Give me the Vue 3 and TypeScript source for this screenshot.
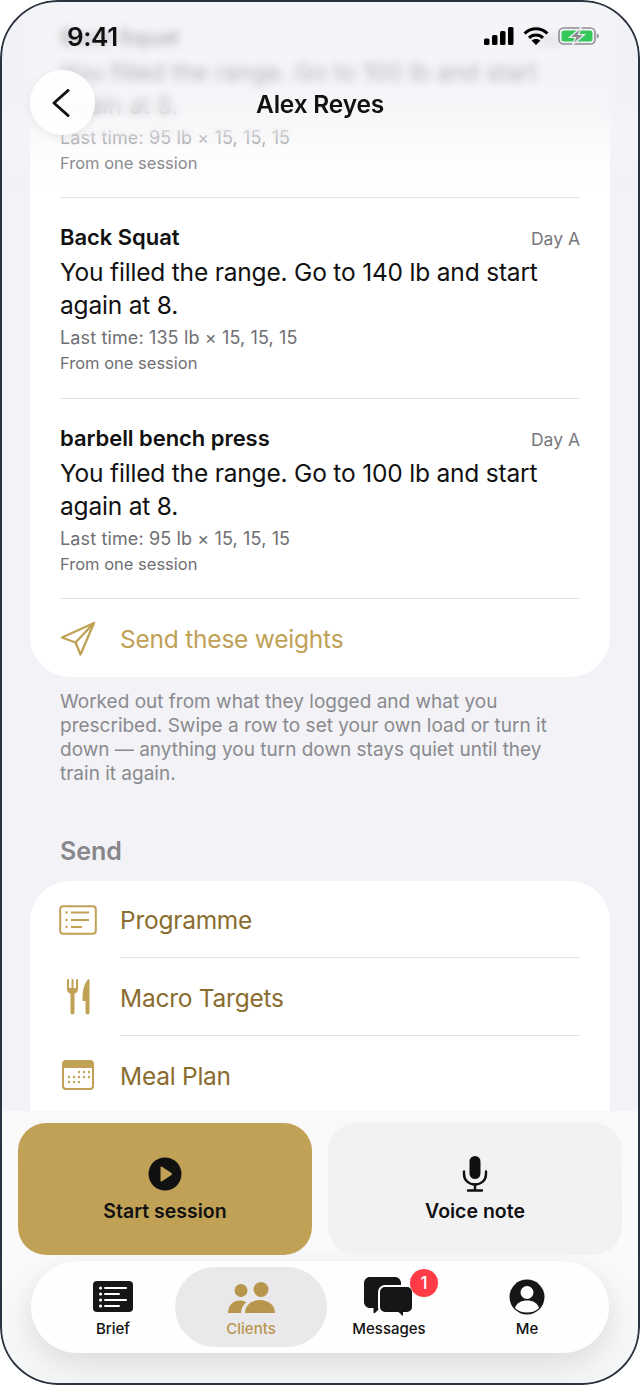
<script setup lang="ts">
const lifts = [
  { name: 'Back Squat', weight: 100, last: 95 },
  { name: 'Back Squat', weight: 140, last: 135 },
  { name: 'barbell bench press', weight: 100, last: 95 },
]
const sendItems = ['Programme', 'Macro Targets', 'Meal Plan']
const tabs = ['Brief', 'Clients', 'Messages', 'Me']

// calendar dots: x positions per row
const dots: number[][] = []
const rows: [number, number[]][] = [
  [12, [17, 22, 27]],
  [17, [7, 12, 17, 22, 27]],
  [22, [7, 12, 17]],
]
for (const [y, xs] of rows) {
  for (const x of xs) dots.push([x, y])
}
</script>

<template>
  <div class="phone">
    <main class="scroll">
      <section class="card weights">
        <div v-for="(lift, i) in lifts" :key="i" class="lift">
          <div class="lift-head">
            <strong>{{ lift.name }}</strong>
            <span>Day A</span>
          </div>
          <p class="advice">You filled the range. Go to {{ lift.weight }} lb and start again at 8.</p>
          <p class="meta">Last time: {{ lift.last }} lb × 15, 15, 15</p>
          <p class="meta from">From one session</p>
        </div>
        <div class="send-weights">
          <svg width="36" height="36" viewBox="0 0 36 36" fill="none" stroke="#c0a156" stroke-width="2.3" stroke-linejoin="round" stroke-linecap="round">
            <path d="M34 2 2 16.500l13.500 5L20.500 33.500Z" />
            <path d="M34 2 15.500 21.500" />
          </svg>
          <span>Send these weights</span>
        </div>
      </section>

      <p class="note">Worked out from what they logged and what you prescribed. Swipe a row to set your own load or turn it down — anything you turn down stays quiet until they train it again.</p>

      <h2 class="section-title">Send</h2>

      <section class="card send-list">
        <div v-for="item in sendItems" :key="item" class="send-row">
          <span class="send-icon">
            <svg v-if="item === 'Programme'" width="38" height="30" viewBox="0 0 38 30" fill="none" stroke="#c0a156">
              <rect x="1.200" y="1.200" width="35.600" height="27.600" rx="3" stroke-width="2" />
              <path d="M12 7.500h18M12 15h18M12 22h11" stroke-width="1.800" />
              <path d="M6.500 7.500h2M6.500 15h2M6.500 22h2" stroke-width="2.400" />
            </svg>
            <svg v-else-if="item === 'Macro Targets'" width="24" height="38" viewBox="0 0 24 38" fill="#c0a156">
              <path d="M1 2a1 1 0 0 1 2 0V10h2.500V2a1 1 0 0 1 2 0V10H10V2a1 1 0 0 1 2 0V11c0 2.500-1.200 4-3.500 4.800V34.500a2 2 0 0 1-4 0V15.800C2.200 15 1 13.500 1 11Z" />
              <path d="M22 1.500c.8-.4 1.500 0 1.500 1V34.500a2 2 0 0 1-4 0V23H17.500c-.7 0-1-.4-1-1 0-9 1.500-16.500 5.500-20.500Z" />
            </svg>
            <svg v-else width="32" height="30" viewBox="0 0 32 30">
              <rect x="1" y="1" width="30" height="28" rx="3" fill="#fff" stroke="#c0a156" stroke-width="2" />
              <path d="M1 8V4a3 3 0 0 1 3-3h24a3 3 0 0 1 3 3v4Z" fill="#c0a156" />
              <circle v-for="d in dots" :key="d[0] + '-' + d[1]" :cx="d[0]" :cy="d[1]" r="1.200" fill="#c0a156" />
            </svg>
          </span>
          <span class="send-label">{{ item }}</span>
        </div>
      </section>
    </main>

    <div class="top-blur"></div>
    <div class="top-tint"></div>
    <header class="topbar">
      <div class="status">
        <span class="clock">9:41</span>
        <span class="status-icons">
          <svg width="30" height="18" viewBox="0 0 30 18" fill="#000">
            <rect x="0" y="11.500" width="5.500" height="6.500" rx="1.500" />
            <rect x="8" y="8" width="5.500" height="10" rx="1.500" />
            <rect x="16" y="4" width="5.500" height="14" rx="1.500" />
            <rect x="24" y="0" width="5.500" height="18" rx="1.500" />
          </svg>
          <svg width="26" height="18" viewBox="0 0 26 18" fill="none" stroke="#000" stroke-width="3">
            <path d="M1.500 6.500C8.500 .200 17.500 .200 24.500 6.500" />
            <path d="M6 10.800c4-3.700 10-3.700 14 0" />
            <path d="M13 18 8.600 13.600c2.500-2 6.300-2 8.800 0Z" fill="#000" stroke="none" />
          </svg>
          <svg width="41" height="18" viewBox="0 0 41 18">
            <rect x="1" y="1" width="36" height="16" rx="4.500" fill="none" stroke="#8e8e93" stroke-width="1.600" />
            <rect x="3.500" y="3.500" width="31" height="11" rx="2.500" fill="#34c759" />
            <path d="M38.800 6.500c1.500.4 2 1.400 2 2.500s-.5 2.100-2 2.500Z" fill="#8e8e93" />
            <path d="M23.500 0 11.500 10.500h6L14.500 18l12-10.500h-6Z" fill="#8e8e93" stroke="#f0f0f5" stroke-width="1.200" />
          </svg>
        </span>
      </div>
      <div class="navbar">
        <button class="back" aria-label="Back">
          <svg width="18" height="28" viewBox="0 0 18 28" fill="none" stroke="#111" stroke-width="3" stroke-linecap="round" stroke-linejoin="round">
            <path d="M16 1.500 2 14l14 12.500" />
          </svg>
        </button>
        <h1>Alex Reyes</h1>
      </div>
    </header>

    <footer class="dock">
      <div class="actions">
        <button class="action start">
          <span class="action-icon">
            <svg width="34" height="34" viewBox="0 0 34 34">
              <circle cx="17" cy="17" r="16.500" fill="#111" />
              <path d="M12.500 10.500c0-.8.800-1.200 1.500-.8l9.500 6.300c.6.400.6 1.500 0 1.900L14 24.300c-.7.500-1.500 0-1.500-.8Z" fill="#c0a156" />
            </svg>
          </span>
          <span>Start session</span>
        </button>
        <button class="action voice">
          <span class="action-icon">
            <svg width="26" height="36" viewBox="0 0 26 36" fill="none" stroke="#111" stroke-width="2.400" stroke-linecap="round">
              <rect x="7.500" y="0" width="11" height="23" rx="5.500" fill="#111" stroke="none" />
              <path d="M2 15.500v2.500c0 6.500 5 10.500 11 10.500s11-4 11-10.500v-2.500" />
              <path d="M13 28.500v5.500M6 34.500h14" />
            </svg>
          </span>
          <span>Voice note</span>
        </button>
      </div>
      <nav class="tabbar">
        <div v-for="tab in tabs" :key="tab" class="tab" :class="{ active: tab === 'Clients' }">
          <span class="tab-icon">
            <svg v-if="tab === 'Brief'" width="40" height="32" viewBox="0 0 40 32">
              <rect width="40" height="31" rx="4" fill="#161616" />
              <g stroke="#fff" stroke-width="2" stroke-linecap="round">
                <path d="M12 7h21M12 13h14M12 19h21M12 25h14" />
                <path d="M7.500 7h.1M7.500 13h.1M7.500 19h.1M7.500 25h.1" stroke-width="3" />
              </g>
            </svg>
            <svg v-else-if="tab === 'Clients'" width="47" height="31" viewBox="0 0 47 31" fill="#b8964e">
              <circle cx="13" cy="8.500" r="6.500" />
              <circle cx="33" cy="7.500" r="7.500" />
              <path d="M0 31c0-8 5.500-12.500 12-12.500 2.500 0 4.500.6 6.300 1.700C15 23 13.200 26.500 13 31Z" />
              <path d="M17 31c0-8 7-13 15-13s15 5 15 13Z" />
            </svg>
            <svg v-else-if="tab === 'Messages'" width="50" height="40" viewBox="0 0 50 40">
              <path d="M6 0h25c3.300 0 6 2.700 6 6v19c0 3.300-2.700 6-6 6H16l-5 5c-.8.600-1.500.2-1.500-.7V31H6c-3.300 0-6-2.700-6-6V6c0-3.300 2.700-6 6-6Z" fill="#161616" />
              <path d="M21 9h22c3.300 0 6 2.700 6 6v15c0 3.300-2.700 6-6 6h-3v3.300c0 .9-.8 1.300-1.500.7l-4.500-4H21c-3.300 0-6-2.700-6-6V15c0-3.300 2.700-6 6-6Z" fill="#161616" stroke="#fff" stroke-width="2" />
            </svg>
            <svg v-else width="36" height="36" viewBox="0 0 36 36">
              <circle cx="18" cy="18" r="17.500" fill="#161616" />
              <circle cx="18" cy="13.500" r="6.500" fill="#fff" />
              <path d="M6 29c1.500-5 6-7.500 12-7.500S28.500 24 30 29c-3 3-7 4.500-12 4.500S9 32 6 29Z" fill="#fff" />
            </svg>
            <span v-if="tab === 'Messages'" class="badge">1</span>
          </span>
          <span class="tab-label">{{ tab }}</span>
        </div>
      </nav>
    </footer>

    <div class="frame"></div>
  </div>
</template>

<style>
html,
body {
  margin: 0;
  background: #fff;
}
</style>

<style scoped>
.phone {
  position: relative;
  width: 640px;
  height: 1385px;
  overflow: hidden;
  border-radius: 58px;
  background: #f2f2f7;
  font-family: Inter, 'Liberation Sans', sans-serif;
  color: #111;
}

.frame {
  position: absolute;
  inset: 0;
  border: 2px solid #2b3340;
  border-radius: 58px;
  pointer-events: none;
}

.scroll {
  height: 100%;
  overflow: hidden;
  padding: 0 30px;
  box-sizing: border-box;
}

.card {
  background: #fff;
  border-radius: 40px;
  padding: 0 30px;
}

.weights {
  margin-top: -2.500px;
  border-top-left-radius: 0;
  border-top-right-radius: 0;
}

.lift {
  height: 200.500px;
  box-sizing: border-box;
  padding-top: 24px;
  border-bottom: 1px solid #e3e3e8;
}

.lift-head {
  display: flex;
  justify-content: space-between;
  align-items: center;
  height: 30px;
}

.lift-head strong {
  font-size: 22px;
  font-weight: 600;
  letter-spacing: -0.05px;
}

.lift-head span {
  font-size: 17.500px;
  color: #77777c;
  padding-top: 3px;
}

.advice {
  margin: 4px 0 0;
  font-size: 24.500px;
  line-height: 33px;
  letter-spacing: -0.19px;
}

.meta {
  margin: 3px 0 0;
  font-size: 18px;
  line-height: 26px;
  letter-spacing: 0.13px;
  color: #6f6f74;
}

.meta.from {
  margin: -1px 0 0;
  font-size: 16.500px;
  letter-spacing: 0;
}

.send-weights {
  display: flex;
  align-items: center;
  gap: 24px;
  height: 78px;
  padding-top: 1px;
  box-sizing: border-box;
  color: #c0a156;
  font-size: 24.500px;
  letter-spacing: -0.22px;
}

.note {
  margin: 12.500px 30px 0;
  font-size: 19px;
  line-height: 24px;
  color: #8a8a8e;
}

.section-title {
  margin: 49.500px 30px 0;
  font-size: 25px;
  line-height: 32px;
  font-weight: 600;
  color: #87878c;
}

.send-list {
  margin-top: 14px;
  padding-bottom: 60px;
  border-bottom-left-radius: 0;
  border-bottom-right-radius: 0;
}

.send-row {
  display: flex;
  align-items: center;
  height: 78px;
}

.send-row:first-child {
  height: 77px;
}

.send-icon {
  width: 38px;
  margin-left: -1px;
  margin-right: 23px;
  display: flex;
  justify-content: center;
}

.send-label {
  flex: 1;
  align-self: stretch;
  display: flex;
  align-items: center;
  padding-top: 2px;
  font-size: 24.500px;
  letter-spacing: -0.25px;
  color: #8a6c2f;
  border-bottom: 1px solid #e3e3e8;
}

.send-row:last-child .send-label {
  border-bottom: 0;
}

.top-blur {
  position: absolute;
  top: 0;
  left: 0;
  right: 0;
  height: 175px;
  backdrop-filter: blur(4px);
  mask-image: linear-gradient(#000 105px, transparent 150px);
}

.top-tint {
  position: absolute;
  top: 0;
  left: 0;
  right: 0;
  height: 190px;
  background: linear-gradient(rgba(241, 241, 246, 0.74) 0, rgba(241, 241, 246, 0.74) 80px, rgba(243, 243, 247, 0.78) 105px, rgba(245, 245, 248, 0.6) 130px, rgba(247, 247, 250, 0.28) 155px, rgba(247, 247, 250, 0) 190px);
}

.topbar {
  position: absolute;
  top: 0;
  left: 0;
  right: 0;
}

.status {
  display: flex;
  align-items: center;
  justify-content: space-between;
  height: 72px;
  padding: 0 41px 0 67px;
}

.clock {
  font-size: 26px;
  font-weight: 600;
  letter-spacing: -0.4px;
}

.status-icons {
  display: flex;
  align-items: center;
  gap: 9px;
}

.navbar {
  position: relative;
  display: flex;
  align-items: center;
  justify-content: center;
  height: 63px;
}

.navbar h1 {
  margin: 0;
  font-size: 24.500px;
  font-weight: 600;
  letter-spacing: -0.2px;
}

.back {
  position: absolute;
  left: 30px;
  top: -2px;
  width: 65px;
  height: 65px;
  display: flex;
  align-items: center;
  justify-content: center;
  padding: 0 4px 0 0;
  border: 0;
  border-radius: 50%;
  background: rgba(255, 255, 255, 0.92);
  box-shadow: 0 2px 8px rgba(0, 0, 0, 0.08);
}

.dock {
  position: absolute;
  left: 0;
  right: 0;
  top: 1111px;
  bottom: 0;
  box-sizing: border-box;
  padding: 12px 18px 0;
  background: linear-gradient(#f9f9f9, #fbfbfd 40%, #f4f5f7);
}

.actions {
  display: flex;
  gap: 16px;
  height: 132px;
}

.action {
  flex: 1;
  display: flex;
  flex-direction: column;
  align-items: center;
  justify-content: flex-start;
  gap: 6px;
  padding: 33px 0 0;
  border: 0;
  border-radius: 28px;
  font: 600 19.500px/26px Inter, 'Liberation Sans', sans-serif;
  color: #111;
}

.action-icon {
  height: 36px;
  display: flex;
  align-items: center;
}

.start {
  background: #c0a156;
}

.voice {
  background: #f2f2f3;
}

.tabbar {
  display: grid;
  grid-template-columns: repeat(4, 1fr);
  height: 92px;
  box-sizing: border-box;
  margin: 6px 13px 0;
  padding: 6px 13px;
  border-radius: 46px;
  background: #fefefe;
  box-shadow: 0 10px 28px rgba(0, 0, 0, 0.11);
}

.tab {
  display: flex;
  flex-direction: column;
  align-items: center;
  border-radius: 40px;
}

.tab.active {
  margin: 0 -7px;
  background: #e9e9eb;
  color: #b8964e;
}

.tab-icon {
  position: relative;
  height: 44px;
  margin-top: 8px;
  display: flex;
  align-items: center;
}

.tab-label {
  margin-top: 0;
  font-size: 15px;
  line-height: 20px;
  font-weight: 450;
}

.badge {
  position: absolute;
  right: -24px;
  top: -6px;
  width: 28px;
  height: 28px;
  border-radius: 50%;
  background: #ff3b46;
  color: #fff;
  font-size: 17px;
  font-weight: 500;
  line-height: 28px;
  text-align: center;
}
</style>
